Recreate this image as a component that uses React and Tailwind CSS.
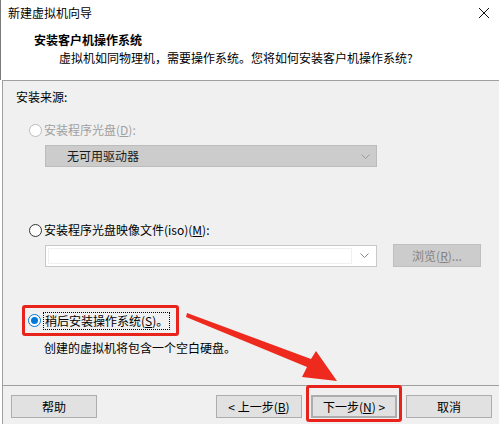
import React from 'react';

const font = { fontFamily: '"Noto Sans CJK SC", "Noto Sans", sans-serif' };

function Radio({ state }) {
  if (state === 'disabled') {
    return <span className="block w-[13px] h-[13px] rounded-full border border-[#bcbcbc] bg-white" />;
  }
  if (state === 'checked') {
    return (
      <span className="flex items-center justify-center w-[13px] h-[13px] rounded-full border border-[#0078d7] bg-white">
        <span className="block w-[7px] h-[7px] rounded-full bg-[#0078d7]" />
      </span>
    );
  }
  return <span className="block w-[13px] h-[13px] rounded-full border border-[#333333] bg-white" />;
}

function Chevron({ color = '#a0a0a0' }) {
  return (
    <svg width="9" height="5" viewBox="0 0 9 5">
      <path d="M0.5 0.5 L4.5 4.5 L8.5 0.5" fill="none" stroke={color} strokeWidth="1" />
    </svg>
  );
}

function Button({ children, className = '' }) {
  return (
    <div className={`flex items-center justify-center w-[86px] h-[23px] bg-[#e1e1e1] border border-[#adadad] text-[12px] text-black ${className}`}>
      {children}
    </div>
  );
}

export default function App() {
  return (
    <div className="relative w-[499px] h-[424px] bg-white overflow-hidden text-black" style={font}>
      {/* title bar */}
      <div className="flex items-center justify-between h-[26px] pl-[7px] pr-[8px] border-l border-[#7a7a7a]">
        <span className="text-[12px] leading-4">新建虚拟机向导</span>
        <svg width="12" height="12" viewBox="0 0 12 12" className="mr-[1px]">
          <path d="M1 1 L11 11 M11 1 L1 11" stroke="#111" strokeWidth="1" />
        </svg>
      </div>

      {/* header */}
      <div className="h-[54px] pl-[33px] pt-[6px] border-l border-[#7a7a7a]">
        <div className="text-[12px] leading-4 font-bold">安装客户机操作系统</div>
        <div className="text-[12px] leading-4 mt-[2px] pl-[25px]">虚拟机如同物理机，需要操作系统。您将如何安装客户机操作系统?</div>
      </div>

      <div className="h-[305px] ml-[2px] bg-[#f0f0f0] border-t border-l border-[#a0a0a0] pl-[13px]">
        <div className="text-[12px] leading-4 mt-[8px]">安装来源:</div>

        <div className="flex items-center gap-[2px] mt-[17px] ml-[13px] text-[12px] leading-4 text-[#a0a0a0]">
          <Radio state="disabled" />
          <span>安装程序光盘(<span className="underline">D</span>):</span>
        </div>

        <div className="flex items-center justify-between w-[332px] h-[22px] mt-[7px] ml-[29px] bg-[#cccccc] border border-[#bcbcbc] pl-[21px] pr-[6px] text-[12px]">
          <span className="text-[#1a1a1a]">无可用驱动器</span>
          <Chevron color="#9a9a9a" />
        </div>

        <div className="flex items-center gap-[2px] mt-[55px] ml-[13px] text-[12px] leading-4">
          <Radio state="normal" />
          <span>安装程序光盘映像文件(iso)(<span className="underline">M</span>):</span>
        </div>

        <div className="flex items-center mt-[6px] ml-[29px]">
          <div className="flex items-center w-[332px] h-[22px] bg-white border border-[#c8c8c8] p-[2px] pr-[7px]">
            <div className="flex-1 h-full bg-white border border-[#f0f0f0]" />
            <div className="ml-[8px]"><Chevron color="#8a8a8a" /></div>
          </div>
          <div className="flex items-center justify-center w-[88px] h-[23px] ml-[16px] bg-[#cccccc] border border-[#bfbfbf] text-[12px] text-[#838383]">
            浏览(<span className="underline">R</span>)...
          </div>
        </div>

        <div className="flex items-center w-[157px] h-[31px] mt-[38px] ml-[6px] border-[3px] border-[#e8231c] rounded-[3px] pl-[3px]">
          <Radio state="checked" />
          <span className="ml-[2px] px-[1px] text-[12px] leading-4 border border-dotted border-black">稍后安装操作系统(<span className="underline">S</span>)。</span>
        </div>

        <div className="text-[12px] leading-4 mt-[4px] ml-[28px]">创建的虚拟机将包含一个空白硬盘。</div>
      </div>

      {/* footer */}
      <div className="h-[39px] ml-[2px] bg-[#f0f0f0] border-t border-l border-[#a0a0a0] flex items-start pt-[9px] pl-[8px]">
        <Button>帮助</Button>
        <Button className="ml-[119px]">&lt; 上一步(<span className="underline">B</span>)</Button>
        <div className="relative ml-[9px]">
          <Button className="border-2 border-[#0078d7]">下一步(<span className="underline">N</span>) &gt;</Button>
          <div className="absolute left-[-5px] top-[-10px] w-[96px] h-[37px] border-[3px] border-[#e8231c] rounded-[3px]" />
        </div>
        <Button className="ml-[9px]">取消</Button>
      </div>

      {/* annotation arrow */}
      <svg className="absolute left-0 top-0 pointer-events-none" width="499" height="424" viewBox="0 0 499 424">
        <polygon points="186,317 187,313 311,359 316,351 337,381 302,377 307,367" fill="#ee2a1f" />
      </svg>
    </div>
  );
}
